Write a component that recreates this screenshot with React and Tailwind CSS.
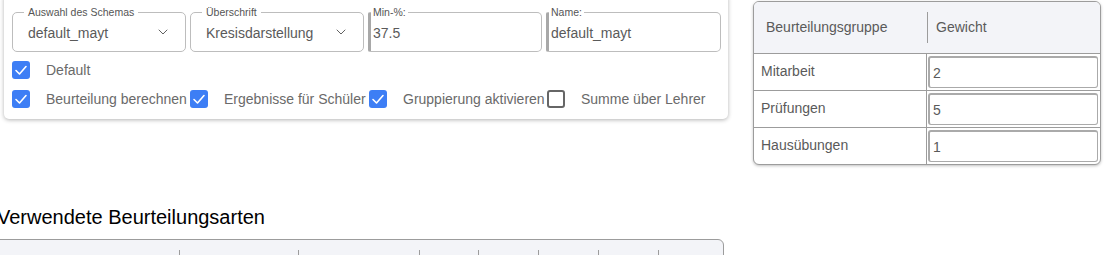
import React from "react";
import { ChevronDown } from "lucide-react";

const font = { fontFamily: '"Liberation Sans", Arial, sans-serif' };

function SelectField({ label, value, className = "" }) {
  return (
    <div className={"relative h-[40px] w-[174px] rounded-[5px] border border-[#bdbdbd] flex items-center pl-[15px] pr-[14px] " + className}>
      <span className="absolute -top-[6px] left-[11px] bg-white px-[4px] text-[10.5px] leading-[11px] text-[#555]">{label}</span>
      <span className="flex-1 pt-[2px] text-[14px] text-[#5a5a5a]">{value}</span>
      <ChevronDown size={16} strokeWidth={1.4} className="text-[#555]" />
    </div>
  );
}

function TextField({ label, value, className = "" }) {
  return (
    <div className={"relative h-[40px] w-[174px] rounded-r-[5px] rounded-l-[2px] border border-[#bdbdbd] border-l-[3px] border-l-[#a8a8a8] flex items-center pl-[2px] " + className}>
      <span className="absolute -top-[6px] left-[0px] bg-white px-[2px] text-[10.5px] leading-[11px] text-[#555]">{label}</span>
      <span className="pt-[2px] text-[14px] text-[#5a5a5a]">{value}</span>
    </div>
  );
}

function Check({ checked }) {
  if (!checked) {
    return <span className="block h-[18px] w-[18px] shrink-0 rounded-[3px] border-2 border-[#666] bg-white" />;
  }
  return (
    <span className="flex h-[18px] w-[18px] shrink-0 items-center justify-center rounded-[3px] bg-[#3d7ef5]">
      <svg width="18" height="18" viewBox="0 0 18 18">
        <polyline points="4,9.5 7.5,13 14,5.5" fill="none" stroke="white" strokeWidth="1.6" strokeLinecap="round" strokeLinejoin="round" />
      </svg>
    </span>
  );
}

function CheckItem({ checked, label }) {
  return (
    <div className="flex items-center">
      <Check checked={checked} />
      <span className="ml-[16px] whitespace-nowrap text-[14px] leading-[18px] text-[#6a6a6a]">{label}</span>
    </div>
  );
}

function WeightRow({ name, value }) {
  return (
    <div className="flex h-[37px] border-t border-[#9c9c9c]">
      <div className="w-[173px] border-r border-[#9c9c9c] pl-[7px] pt-[7px] text-[14px] text-[#5a5a5a]">{name}</div>
      <div className="flex-1 pl-[1px] pr-[2px] pt-[2px]">
        <div className="flex h-[32px] items-center rounded-[3px] border border-[#aaa] border-l-[2px] border-t-[2px] pl-[3px] pt-[2px] text-[14px] text-[#5a5a5a]">
          {value}
        </div>
      </div>
    </div>
  );
}

const bottomCols = [180, 119, 121, 59, 60, 60, 60, 65];

export default function App() {
  return (
    <div className="flex w-[1105px] h-[255px] overflow-hidden bg-white" style={font}>
      <div className="w-[728px] shrink-0">
        <div className="ml-[4px] -mt-[4px] w-[724px] rounded-b-[5px] bg-white pt-[16px] pb-[11px] pl-[8px] shadow-[0_1px_4px_rgba(0,0,0,0.3)]">
          <div className="flex gap-[4px]">
            <SelectField label="Auswahl des Schemas" value="default_mayt" />
            <SelectField label="Überschrift" value="Kresisdarstellung" />
            <TextField label="Min-%:" value="37.5" />
            <TextField label="Name:" value="default_mayt" className="w-[175px]" />
          </div>
          <div className="mt-[9px]">
            <CheckItem checked label="Default" />
          </div>
          <div className="mt-[11px] grid grid-cols-[178px_179px_178px_160px]">
            <CheckItem checked label="Beurteilung berechnen" />
            <CheckItem checked label="Ergebnisse für Schüler" />
            <CheckItem checked label="Gruppierung aktivieren" />
            <CheckItem checked={false} label="Summe über Lehrer" />
          </div>
        </div>
        <h2 className="-ml-[3px] mt-[86px] whitespace-nowrap text-[20px] leading-[24px] text-black">Verwendete Beurteilungsarten</h2>
        <div className="-ml-[2px] mt-[10px] flex h-[40px] w-[726px] rounded-tr-[6px] border border-[#9c9c9c] bg-[#f3f4f8]">
          {bottomCols.map((w, i) => (
            <div key={i} className="h-full" style={{ width: w }}>
              {i > 0 && <div className="mt-[10px] h-[30px] w-px bg-[#9c9c9c]" />}
            </div>
          ))}
        </div>
      </div>
      <div className="ml-[25px] mt-[1px] h-[164px] w-[348px] overflow-hidden rounded-[6px] border border-[#9c9c9c] bg-white shadow-[0_1px_3px_rgba(0,0,0,0.25)]">
        <div className="flex h-[51px] bg-[#f3f4f8]">
          <div className="flex w-[173px] items-center pl-[12px] text-[14px] text-[#5a5a5a]">Beurteilungsgruppe</div>
          <div className="flex flex-1 items-center">
            <div className="h-[31px] w-px bg-[#9c9c9c]" />
            <span className="ml-[8px] text-[14px] text-[#5a5a5a]">Gewicht</span>
          </div>
        </div>
        <WeightRow name="Mitarbeit" value="2" />
        <WeightRow name="Prüfungen" value="5" />
        <WeightRow name="Hausübungen" value="1" />
      </div>
    </div>
  );
}
